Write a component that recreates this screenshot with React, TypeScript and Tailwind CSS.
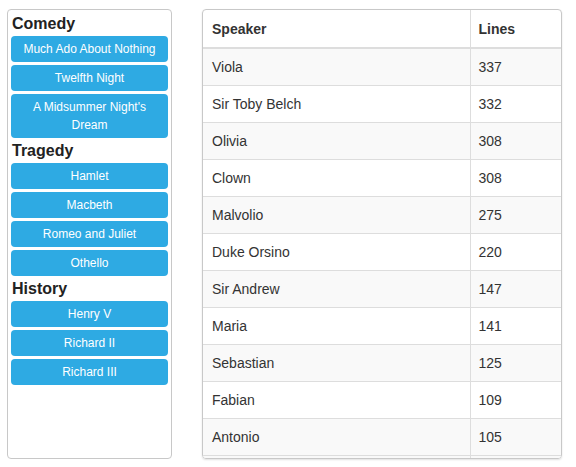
import React from "react";

const plays = [
  { genre: "Comedy", titles: ["Much Ado About Nothing", "Twelfth Night", "A Midsummer Night's Dream"] },
  { genre: "Tragedy", titles: ["Hamlet", "Macbeth", "Romeo and Juliet", "Othello"] },
  { genre: "History", titles: ["Henry V", "Richard II", "Richard III"] },
];

const speakers: [string, number][] = [
  ["Viola", 337],
  ["Sir Toby Belch", 332],
  ["Olivia", 308],
  ["Clown", 308],
  ["Malvolio", 275],
  ["Duke Orsino", 220],
  ["Sir Andrew", 147],
  ["Maria", 141],
  ["Sebastian", 125],
  ["Fabian", 109],
  ["Antonio", 105],
];

export default function App() {
  return (
    <div className="flex h-[467px] w-[576px] items-start gap-[30px] bg-white pl-[7px] pt-[9px] font-['Liberation_Sans',Arial,sans-serif] text-[#333]">
      {/* Play list */}
      <div className="flex h-[450px] w-[165px] shrink-0 flex-col gap-[3px] rounded-[4px] border border-[#c8c8c8] px-[3px] pt-[4px]">
        {plays.map(({ genre, titles }) => (
          <React.Fragment key={genre}>
            <h2 className="h-[19px] pl-[1px] text-[16px] leading-[19px] font-bold text-[#222]">{genre}</h2>
            {titles.map((t) => (
              <button
                key={t}
                className="rounded-[4px] bg-[#2eaae3] px-[8px] py-[4px] text-center text-[12px] leading-[18px] text-white"
              >
                {t}
              </button>
            ))}
          </React.Fragment>
        ))}
      </div>

      {/* Speaker table */}
      <div className="h-[450px] w-[360px] shrink-0 overflow-hidden rounded-[4px] border border-[#c8c8c8] shadow-[0_1px_2px_rgba(0,0,0,0.12)]">
        <table className="w-full border-collapse text-[14px]">
          <thead>
            <tr className="h-[38px] border-b-2 border-[#ddd]">
              <th className="w-[267px] border-r border-[#ddd] pt-[2px] pl-[9px] text-left font-bold">Speaker</th>
              <th className="pt-[2px] pl-[8px] text-left font-bold">Lines</th>
            </tr>
          </thead>
          <tbody>
            {speakers.map(([name, lines], i) => (
              <tr key={name} className={`h-[37px] border-b border-[#ddd] ${i % 2 === 0 ? "bg-[#f9f9f9]" : "bg-white"}`}>
                <td className="border-r border-[#ddd] pt-[1px] pl-[9px]">{name}</td>
                <td className="pt-[1px] pl-[8px]">{lines}</td>
              </tr>
            ))}
            <tr className="h-[37px] bg-[#f9f9f9]">
              <td className="border-r border-[#ddd]" />
              <td />
            </tr>
          </tbody>
        </table>
      </div>
    </div>
  );
}
